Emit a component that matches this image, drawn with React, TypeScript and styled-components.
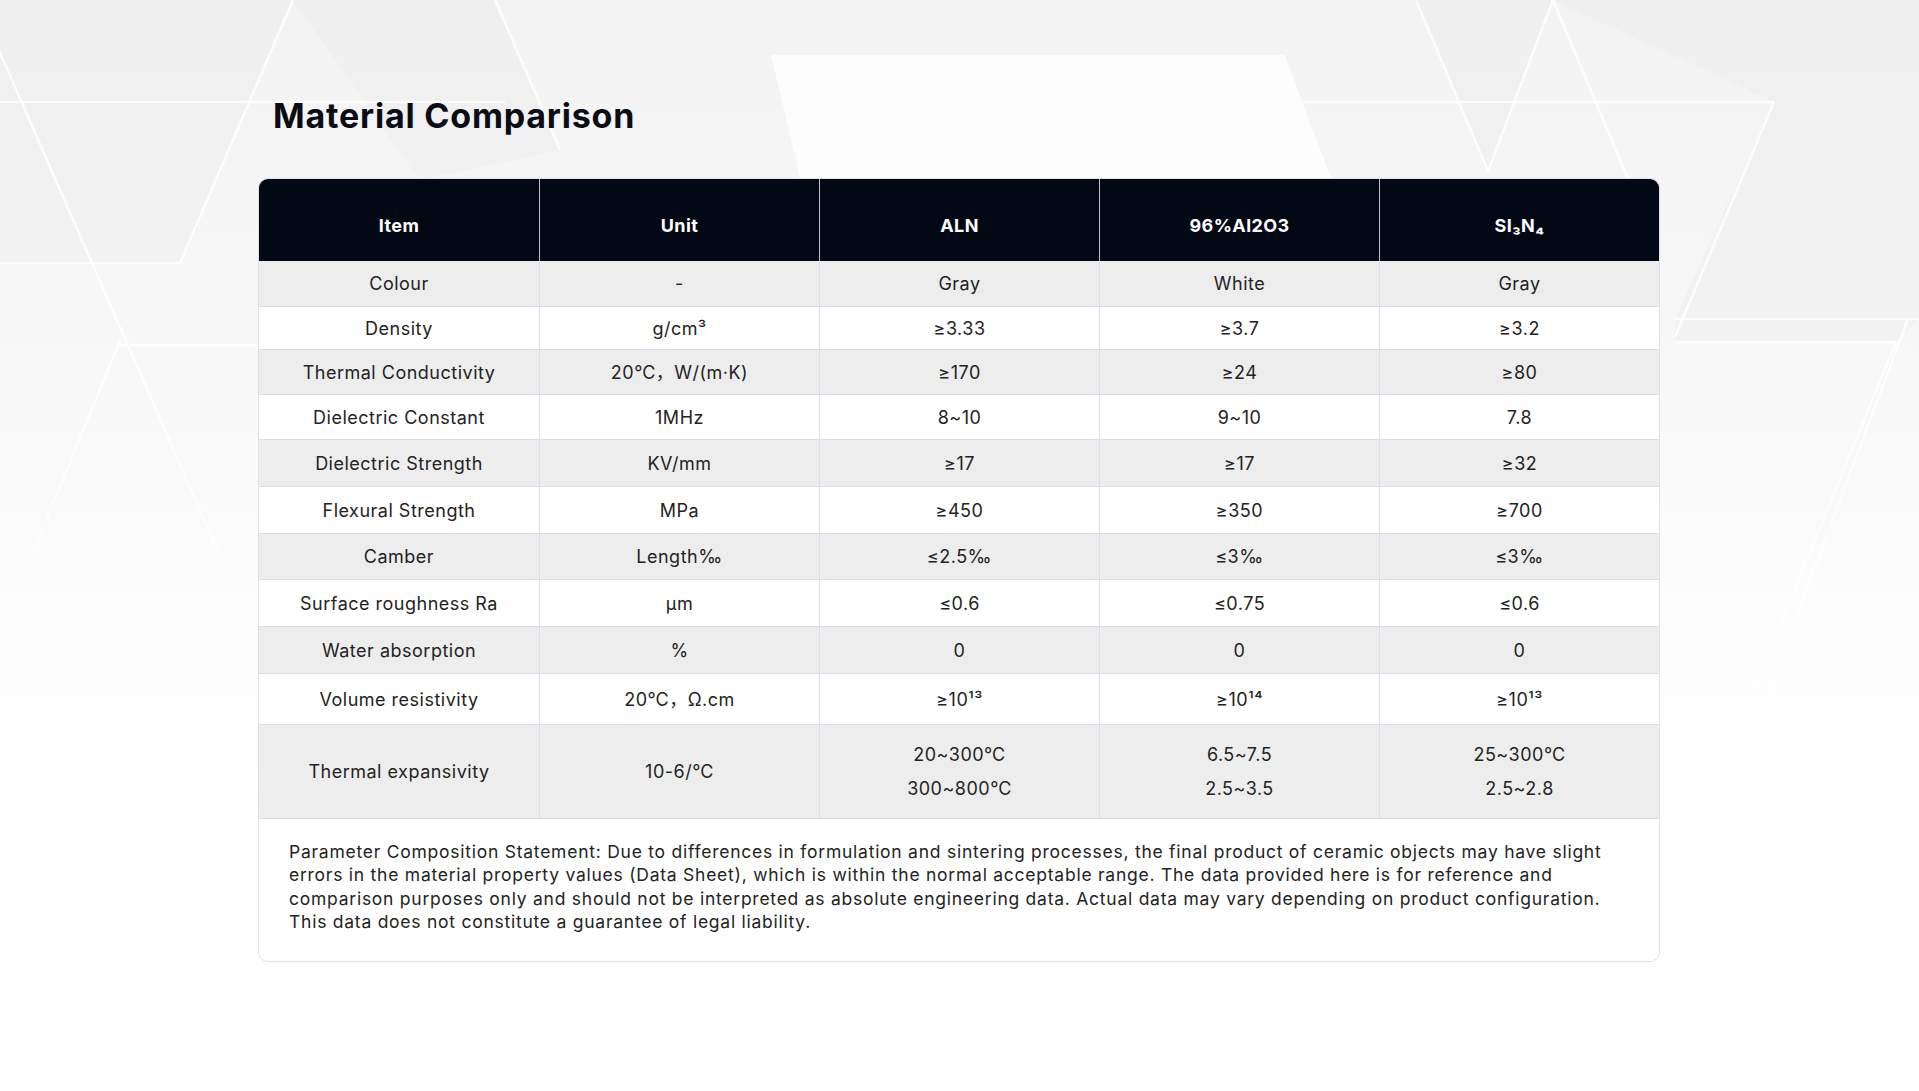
import styled, { createGlobalStyle } from 'styled-components';

const GlobalStyle = createGlobalStyle`
  html, body {
    margin: 0;
    padding: 0;
    background: #ffffff;
  }
  body {
    font-family: Inter, "Noto Sans CJK SC", sans-serif;
    color: #222222;
  }
  * {
    box-sizing: border-box;
  }
`;

const Page = styled.div`
  position: relative;
  width: 1919px;
  height: 1091px;
  overflow: hidden;
  background: linear-gradient(180deg, #f3f3f3 0%, #f7f7f7 30%, #fcfcfc 55%, #ffffff 75%);
`;

const Backdrop = styled.svg`
  position: absolute;
  inset: 0;
  width: 100%;
  height: 100%;
`;

const Content = styled.main`
  position: relative;
  width: 1660px;
  padding: 95px 0 0 258px;
`;

const Title = styled.h1`
  margin: 0 0 41px 15px;
  font-size: 34px;
  line-height: 42px;
  font-weight: 700;
  letter-spacing: 0.8px;
  color: #0a0c16;
`;

const Card = styled.section`
  width: 1402px;
  border: 1px solid #e0e0ec;
  border-radius: 10px;
  overflow: hidden;
  background: rgba(255, 255, 255, 0.6);
`;

const HeadRow = styled.div`
  display: grid;
  grid-template-columns: repeat(5, 1fr);
  height: 82px;
  background: #020914;
`;

const HeadCell = styled.div`
  display: flex;
  align-items: center;
  justify-content: center;
  padding-top: 10px;
  font-size: 18px;
  font-weight: 700;
  letter-spacing: 0.4px;
  color: #ffffff;
  & + & {
    border-left: 1px solid rgba(255, 255, 255, 0.75);
  }
`;

const Row = styled.div<{ $h: number; $shade: boolean }>`
  display: grid;
  grid-template-columns: repeat(5, 1fr);
  height: ${(p) => p.$h}px;
  background: ${(p) => (p.$shade ? '#ededed' : 'rgba(255, 255, 255, 0.82)')};
  border-bottom: 1px solid #dcdcea;
`;

const Cell = styled.div`
  display: flex;
  flex-direction: column;
  align-items: center;
  justify-content: center;
  gap: 10px;
  padding-top: 1px;
  font-size: 18px;
  line-height: 24px;
  letter-spacing: 0.5px;
  color: #232323;
  & + & {
    border-left: 1px solid #dcdcea;
  }
`;

const Notes = styled.p`
  margin: 0;
  padding: 21px 20px 27px 30px;
  background: #ffffff;
  font-size: 17.5px;
  line-height: 23.4px;
  letter-spacing: 0.75px;
  color: #232323;
`;

type Value = string | string[];

type RowData = {
  item: string;
  unit: string;
  aln: Value;
  alumina: Value;
  nitride: Value;
  h: number;
};

const headers = ['Item', 'Unit', 'ALN', '96%Al2O3', 'SI₃N₄'];

const rows: RowData[] = [
  { item: 'Colour', unit: '-', aln: 'Gray', alumina: 'White', nitride: 'Gray', h: 46 },
  { item: 'Density', unit: 'g/cm³', aln: '≥3.33', alumina: '≥3.7', nitride: '≥3.2', h: 43 },
  { item: 'Thermal Conductivity', unit: '20℃，W/(m·K)', aln: '≥170', alumina: '≥24', nitride: '≥80', h: 45 },
  { item: 'Dielectric Constant', unit: '1MHz', aln: '8~10', alumina: '9~10', nitride: '7.8', h: 45 },
  { item: 'Dielectric Strength', unit: 'KV/mm', aln: '≥17', alumina: '≥17', nitride: '≥32', h: 47 },
  { item: 'Flexural Strength', unit: 'MPa', aln: '≥450', alumina: '≥350', nitride: '≥700', h: 47 },
  { item: 'Camber', unit: 'Length‰', aln: '≤2.5‰', alumina: '≤3‰', nitride: '≤3‰', h: 46 },
  { item: 'Surface roughness Ra', unit: 'μm', aln: '≤0.6', alumina: '≤0.75', nitride: '≤0.6', h: 47 },
  { item: 'Water absorption', unit: '%', aln: '0', alumina: '0', nitride: '0', h: 47 },
  { item: 'Volume resistivity', unit: '20℃，Ω.cm', aln: '≥10¹³', alumina: '≥10¹⁴', nitride: '≥10¹³', h: 51 },
  {
    item: 'Thermal expansivity',
    unit: '10-6/℃',
    aln: ['20~300℃', '300~800℃'],
    alumina: ['6.5~7.5', '2.5~3.5'],
    nitride: ['25~300℃', '2.5~2.8'],
    h: 94,
  },
];

const renderValue = (v: Value) =>
  Array.isArray(v) ? v.map((line) => <span key={line}>{line}</span>) : v;

// faint low-poly backdrop
const lines: [number, number, number, number][] = [
  [-23, 0, 220, 556],
  [120, 341, 33, 552],
  [0, 102, 505, 102],
  [293, 0, 180, 263],
  [0, 263, 180, 263],
  [120, 345, 258, 345],
  [495, 0, 560, 150],
  [1330, 178, 1300, 102],
  [1416, 0, 1488, 171],
  [1553, 0, 1488, 171],
  [1553, 0, 1628, 179],
  [1300, 102, 1774, 102],
  [1774, 102, 1675, 337],
  [1675, 319, 1919, 319],
  [1908, 319, 1750, 740],
  [1675, 342, 1896, 342],
  [1896, 342, 1754, 689],
];

const shades: string[] = [
  '0,0 293,0 180,263 0,263',
  '293,0 495,0 560,150 420,180',
  '1416,0 1553,0 1488,171',
  '1553,0 1919,0 1919,319 1675,319 1774,102',
  '1675,319 1919,319 1896,342 1675,342',
];

export default function App() {
  return (
    <>
      <GlobalStyle />
      <Page>
        <Backdrop viewBox="0 0 1919 1091" preserveAspectRatio="none">
          {shades.map((pts) => (
            <polygon key={pts} points={pts} fill="#e8e8e8" opacity={0.3} />
          ))}
          <polygon points="771,55 1285,55 1330,178 800,178" fill="#ffffff" opacity={0.8} />
          {lines.map(([x1, y1, x2, y2]) => (
            <line
              key={`${x1}-${y1}-${x2}-${y2}`}
              x1={x1}
              y1={y1}
              x2={x2}
              y2={y2}
              stroke="#ffffff"
              strokeWidth={2.5}
              opacity={0.9}
            />
          ))}
        </Backdrop>
        <Content>
          <Title>Material Comparison</Title>
          <Card>
            <HeadRow>
              {headers.map((h) => (
                <HeadCell key={h}>{h}</HeadCell>
              ))}
            </HeadRow>
            {rows.map((r, i) => (
              <Row key={r.item} $h={r.h} $shade={i % 2 === 0}>
                <Cell>{r.item}</Cell>
                <Cell>{r.unit}</Cell>
                <Cell>{renderValue(r.aln)}</Cell>
                <Cell>{renderValue(r.alumina)}</Cell>
                <Cell>{renderValue(r.nitride)}</Cell>
              </Row>
            ))}
            <Notes>
              Parameter Composition Statement: Due to differences in formulation and sintering processes, the final
              product of ceramic objects may have slight
              <br />
              errors in the material property values (Data Sheet), which is within the normal acceptable range. The data
              provided here is for reference and
              <br />
              comparison purposes only and should not be interpreted as absolute engineering data. Actual data may vary
              depending on product configuration.
              <br />
              This data does not constitute a guarantee of legal liability.
            </Notes>
          </Card>
        </Content>
      </Page>
    </>
  );
}
